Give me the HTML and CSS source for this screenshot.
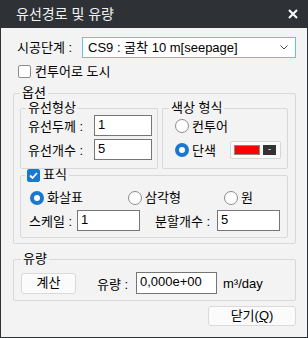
FILE: index.html
```html
<!DOCTYPE html>
<html lang="ko">
<head>
    <meta charset="UTF-8">
    <meta name="viewport" content="width=device-width, initial-scale=1.0">
    <title>유선경로 및 유량</title>
    <link rel="stylesheet" href="styles.css">
</head>
<body>
    <div class="window">
        <div class="titlebar">
            <span class="title">유선경로 및 유량</span>
            <svg class="close" width="10" height="10" viewBox="0 0 10 10">
                <path d="M1 1 L9 9 M9 1 L1 9" stroke="#fff" stroke-width="2" fill="none"/>
            </svg>
        </div>

        <div class="content">
            <div class="stage-row">
                <span class="stage-label">시공단계 :</span>
                <div class="select">
                    <span>CS9 : 굴착 10 m[seepage]</span>
                    <svg class="chevron" width="8" height="5" viewBox="0 0 8 5">
                        <path d="M0.5 0.5 L4 4 L7.5 0.5" stroke="#444" stroke-width="1" fill="none"/>
                    </svg>
                </div>
            </div>

            <label class="check-row">
                <span class="checkbox"></span>컨투어로 도시
            </label>

            <fieldset class="group options">
                <legend>옵션</legend>
                <div class="option-row">
                    <fieldset class="group shape">
                        <legend>유선형상</legend>
                        <div class="line">
                            <span class="field-label">유선두께 :</span>
                            <span class="input small">1</span>
                        </div>
                        <div class="line">
                            <span class="field-label">유선개수 :</span>
                            <span class="input small">5</span>
                        </div>
                    </fieldset>
                    <fieldset class="group color">
                        <legend>색상 형식</legend>
                        <div class="line">
                            <span class="radio"></span>컨투어
                        </div>
                        <div class="line">
                            <span class="radio on"></span>단색
                            <span class="swatch"><span class="swatch-red"></span><span class="swatch-btn">-</span></span>
                        </div>
                    </fieldset>
                </div>

                <fieldset class="group marker">
                    <legend>
                        <span class="checkbox checked">
                            <svg width="11" height="11" viewBox="0 0 11 11">
                                <path d="M2 5.5 L4.5 8 L9 3" stroke="#fff" stroke-width="1.8" fill="none"/>
                            </svg>
                        </span>표식
                    </legend>
                    <div class="radio-grid">
                        <span class="radio-item"><span class="radio on"></span>화살표</span>
                        <span class="radio-item"><span class="radio"></span>삼각형</span>
                        <span class="radio-item"><span class="radio"></span>원</span>
                    </div>
                    <div class="marker-fields">
                        <span class="scale-label">스케일 :</span>
                        <span class="input mid">1</span>
                        <span class="split-label">분할개수 :</span>
                        <span class="input mid">5</span>
                    </div>
                </fieldset>
            </fieldset>

            <fieldset class="group flow">
                <legend>유량</legend>
                <div class="flow-row">
                    <button class="btn calc">계산</button>
                    <span class="flow-label">유량 :</span>
                    <span class="input wide">0,000e+00</span>
                    <span class="unit">m³/day</span>
                </div>
            </fieldset>

            <div class="footer">
                <button class="btn close-btn">닫기(<u>Q</u>)</button>
            </div>
        </div>
    </div>
</body>
</html>
```

FILE: styles.css
```css
body { margin: 0; font-family: "Liberation Sans", "Noto Sans CJK KR", sans-serif; font-size: 13px; color: #000; }
.window { width: 308px; height: 338px; box-sizing: border-box; border: 1px solid #2e3237; border-top: none; background: #f3f3f3; }

.titlebar { height: 28px; background: #2e3237; display: flex; align-items: center; justify-content: space-between; padding: 0 9px 0 15px; box-sizing: border-box; }
.title { color: #f2f2f2; font-size: 14px; line-height: 16px; }
.close { display: block; }

.content { padding: 0 11px 0 12px; }

.stage-row { display: flex; align-items: center; margin-top: 9px; height: 21px; }
.stage-label { width: 65px; padding-left: 4px; line-height: 16px; }
.select { flex: 1; height: 21px; box-sizing: border-box; border: 1px solid #62c4ee; background: #fff; display: flex; align-items: center; justify-content: space-between; padding: 0 7px 0 5px; line-height: 16px; }
.chevron { display: block; }

.check-row { display: flex; align-items: center; gap: 4px; margin-top: 7px; height: 13px; padding-left: 5px; line-height: 16px; }
.checkbox { width: 13px; height: 13px; box-sizing: border-box; border: 1px solid #8c8c8c; border-radius: 2px; background: #fff; display: inline-flex; align-items: center; justify-content: center; }
.checkbox.checked { background: #1a78d0; border-color: #1a78d0; }
.checkbox svg { display: block; }

.group { margin: 0; border: 1px solid #d8d8d8; border-radius: 2px; min-width: 0; }
.group legend { padding: 0 2px; line-height: 14px; }

.options { margin-top: 8px; padding: 0 7px 5px 6px; }
.options > legend { margin-left: 0; }
.option-row { display: flex; gap: 4px; margin-top: 1px; }
.shape { width: 138px; box-sizing: border-box; padding: 0 5px 8px 7px; }
.shape > legend { margin-left: -2px; }
.color { flex: 1; padding: 0 6px 8px 12px; }
.color > legend { margin-left: -6px; }

.line { display: flex; align-items: center; height: 21px; }
.line + .line { margin-top: 3px; }
.field-label { width: 66px; }

.input { display: block; box-sizing: border-box; border: 1px solid #767676; background: #fff; padding: 0 3px; line-height: 17px; }
.input.small { width: 58px; height: 21px; }
.input.mid { width: 63px; height: 21px; }
.input.wide { width: 81px; height: 22px; }

.radio { width: 14px; height: 14px; box-sizing: border-box; border: 1px solid #8c8c8c; border-radius: 50%; background: #fff; margin-right: 3px; display: inline-block; }
.radio.on { border: 4px solid #1a78d0; }

.swatch { margin-left: auto; width: 51px; height: 18px; box-sizing: border-box; border: 1px solid #d6d6d6; border-radius: 2px; background: #fafafa; display: flex; align-items: center; padding-left: 3px; gap: 3px; }
.swatch-red { width: 26px; height: 10px; box-sizing: border-box; border: 1px solid #8a8a8a; background: #ff0000; }
.swatch-btn { width: 13px; height: 10px; background: #333; color: #fff; font-size: 9px; line-height: 9px; text-align: center; }

.marker { margin: -1px 0 0 0; padding: 8px 6px 6px 9px; }
.marker > legend { margin-left: -5px; display: flex; align-items: center; gap: 3px; }
.radio-grid { display: grid; grid-template-columns: 98px 96px auto; height: 16px; align-items: center; }
.radio-item { display: flex; align-items: center; line-height: 16px; }
.marker-fields { display: flex; align-items: center; margin-top: 4px; height: 21px; }
.scale-label { width: 48px; padding-left: 0; margin-left: -1px; }
.split-label { width: 62px; margin-left: 15px; }

.flow { margin-top: 8px; padding: 6px 6px 6px 7px; }
.flow-row { display: flex; align-items: center; height: 22px; }
.btn { font-family: inherit; font-size: 13px; color: #000; background: #fbfbfb; border: 1px solid #dadada; border-radius: 3px; padding: 0; line-height: 16px; }
.calc { width: 55px; height: 21px; }
.flow-label { width: 39px; margin-left: 21px; }
.unit { margin-left: 6px; }

.footer { display: flex; justify-content: flex-end; margin-top: 5px; }
.close-btn { width: 88px; height: 20px; }
```
